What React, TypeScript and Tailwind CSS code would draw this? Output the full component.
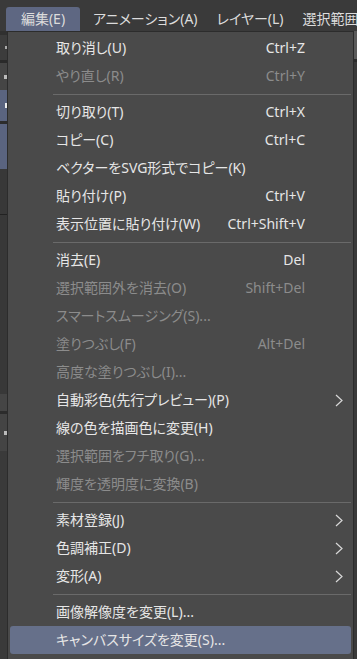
import { ReactNode } from 'react'

type Item =
  | { sep: true }
  | { label: string; key?: string; off?: boolean; sub?: boolean; hot?: boolean; sep?: false }

const items: Item[] = [
  { label: '取り消し(U)', key: 'Ctrl+Z' },
  { label: 'やり直し(R)', key: 'Ctrl+Y', off: true },
  { sep: true },
  { label: '切り取り(T)', key: 'Ctrl+X' },
  { label: 'コピー(C)', key: 'Ctrl+C' },
  { label: 'ベクターをSVG形式でコピー(K)' },
  { label: '貼り付け(P)', key: 'Ctrl+V' },
  { label: '表示位置に貼り付け(W)', key: 'Ctrl+Shift+V' },
  { sep: true },
  { label: '消去(E)', key: 'Del' },
  { label: '選択範囲外を消去(O)', key: 'Shift+Del', off: true },
  { label: 'スマートスムージング(S)...', off: true },
  { label: '塗りつぶし(F)', key: 'Alt+Del', off: true },
  { label: '高度な塗りつぶし(I)...', off: true },
  { label: '自動彩色(先行プレビュー)(P)', sub: true },
  { label: '線の色を描画色に変更(H)' },
  { label: '選択範囲をフチ取り(G)...', off: true },
  { label: '輝度を透明度に変換(B)', off: true },
  { sep: true },
  { label: '素材登録(J)', sub: true },
  { label: '色調補正(D)', sub: true },
  { label: '変形(A)', sub: true },
  { sep: true },
  { label: '画像解像度を変更(L)...' },
  { label: 'キャンバスサイズを変更(S)...', hot: true },
]

function Chevron() {
  return (
    <svg width="8" height="13" viewBox="0 0 8 13" fill="none">
      <path d="M1 1l6 5.5L1 12" stroke="#d8d8d8" strokeWidth="1.2" />
    </svg>
  )
}

function Row({ item }: { item: Item }) {
  if (item.sep) {
    return (
      <div className="h-[8px] flex items-center ml-[45px] mr-[2px]">
        <div className="h-px w-full bg-[#6a6a6a]" />
      </div>
    )
  }
  return (
    <div
      className={
        'h-[28px] flex items-center rounded-[3px] ' +
        (item.hot ? 'bg-[#66708a] mx-[2px] pl-[46px]' : 'pl-[48px]') +
        (item.off ? ' text-[#8c8c8c]' : ' text-[#e6e6e6]')
      }
    >
      <span className="flex-1 whitespace-nowrap">{item.label}</span>
      {item.key && <span className="whitespace-nowrap">{item.key}</span>}
      <span className="w-[48px] flex justify-end pr-[10px]">{item.sub && <Chevron />}</span>
    </div>
  )
}

function Strip({ h, c, children }: { h: number; c: string; children?: ReactNode }) {
  return (
    <div className={c + ' w-full flex items-center justify-end'} style={{ height: h }}>
      {children}
    </div>
  )
}

export default function App() {
  return (
    <div
      className="w-[357px] h-[659px] bg-[#3a3a3a] flex flex-col overflow-hidden text-[14px] leading-none [font-feature-settings:'palt']"
      style={{ fontFamily: '"Noto Sans", "Noto Sans CJK JP", sans-serif' }}
    >
      <div className="h-[31px] flex items-end shrink-0 pl-[6px] text-[#dcdcdc] whitespace-nowrap overflow-hidden">
        <div className="h-[24px] w-[74px] shrink-0 bg-[#5e6782] rounded-t-[3px] flex items-center justify-center">
          編集(E)
        </div>
        <div className="h-[24px] flex items-center shrink-0 pl-[13px] gap-[19px]">
          <span>アニメーション(A)</span>
          <span>レイヤー(L)</span>
          <span>選択範囲</span>
        </div>
      </div>
      <div className="flex flex-1">
        <div className="w-[7px] flex flex-col shrink-0">
          <Strip h={4} c="bg-[#303030]" />
          <Strip h={25} c="bg-[#3c3c3c]">
            <div className="w-[2px] h-[3px] bg-[#aaa]" />
          </Strip>
          <Strip h={3} c="bg-[#2a2a2a]" />
          <Strip h={27} c="bg-[#454545]">
            <div className="w-[3px] h-[4px] bg-[#bbb]" />
          </Strip>
          <Strip h={31} c="bg-[#5a6480]">
            <div className="w-[2px] h-[5px] bg-[#eee]" />
          </Strip>
          <Strip h={3} c="bg-[#2c2c2c]" />
          <Strip h={45} c="bg-[#5a6480]" />
          <Strip h={45} c="bg-[#383838]" />
          <Strip h={1} c="bg-[#222]" />
          <Strip h={179} c="bg-[#383838]" />
          <Strip h={17} c="bg-[#454545]" />
          <Strip h={3} c="bg-[#2c2c2c]" />
          <Strip h={37} c="bg-[#444444]">
            <div className="w-[3px] h-[4px] bg-[#bbb]" />
          </Strip>
          <div className="flex-1 bg-[#3a3a3a]" />
        </div>
        <div className="w-[347px] shrink-0 bg-[#4a4a4a] border-t border-l border-r border-[#2c2c2c] pt-[2px] flex flex-col">
          {items.map((it, i) => (
            <Row key={i} item={it} />
          ))}
        </div>
        <div className="flex-1 flex flex-col">
          <div className="h-[28px] bg-[#5a5a5a]" />
          <div className="h-[3px] bg-[#2c2c2c]" />
          <div className="flex-1 bg-[#3a3a3a]" />
        </div>
      </div>
    </div>
  )
}
